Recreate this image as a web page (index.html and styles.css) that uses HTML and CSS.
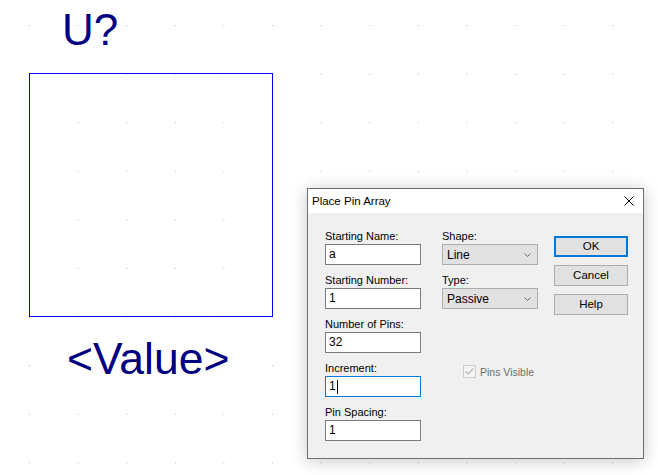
FILE: index.html
```html
<!DOCTYPE html>
<html lang="en">
<head>
    <meta charset="UTF-8">
    <meta name="viewport" content="width=device-width, initial-scale=1.0">
    <title>Place Pin Array</title>
    <link rel="stylesheet" href="styles.css">
</head>
<body>
    <div class="sheet">
        <!-- grid dots of the schematic sheet -->
        <svg class="grid" width="658" height="475">
            <defs>
                <pattern id="dots" x="29" y="25" width="48.6" height="48.6" patternUnits="userSpaceOnUse">
                    <rect x="0" y="0" width="1" height="1" fill="#b9b9b9" shape-rendering="crispEdges"/>
                </pattern>
            </defs>
            <rect width="658" height="475" fill="url(#dots)"/>
        </svg>

        <div class="part-ref">U?</div>
        <div class="part-body"></div>
        <div class="part-value">&lt;Value&gt;</div>

        <div class="dialog">
            <div class="titlebar">
                <span class="title">Place Pin Array</span>
                <span class="close">
                    <svg width="10" height="10" viewBox="0 0 10 10">
                        <path d="M0.5 0.5 L9.5 9.5 M9.5 0.5 L0.5 9.5" stroke="#000" stroke-width="1"/>
                    </svg>
                </span>
            </div>
            <div class="dialog-body">
                <div class="col-fields">
                    <div class="field">
                        <label>Starting Name:</label>
                        <div class="textbox">a</div>
                    </div>
                    <div class="field">
                        <label>Starting Number:</label>
                        <div class="textbox">1</div>
                    </div>
                    <div class="field">
                        <label>Number of Pins:</label>
                        <div class="textbox">32</div>
                    </div>
                    <div class="field">
                        <label>Increment:</label>
                        <div class="textbox focused">1<span class="caret"></span></div>
                    </div>
                    <div class="field">
                        <label>Pin Spacing:</label>
                        <div class="textbox">1</div>
                    </div>
                </div>

                <div class="col-mid">
                    <div class="field">
                        <label>Shape:</label>
                        <div class="combo">
                            <span>Line</span>
                            <svg width="7" height="4" viewBox="0 0 7 4"><polyline points="0.5,0.5 3.5,3.5 6.5,0.5" fill="none" stroke="#6d6d6d" stroke-width="1"/></svg>
                        </div>
                    </div>
                    <div class="field">
                        <label>Type:</label>
                        <div class="combo">
                            <span>Passive</span>
                            <svg width="7" height="4" viewBox="0 0 7 4"><polyline points="0.5,0.5 3.5,3.5 6.5,0.5" fill="none" stroke="#6d6d6d" stroke-width="1"/></svg>
                        </div>
                    </div>
                    <div class="check-row">
                        <span class="checkbox">
                            <svg width="11" height="11" viewBox="0 0 11 11"><polyline points="1.5,5.5 4,8 9.5,2.5" fill="none" stroke="#b4b4b4" stroke-width="1.2"/></svg>
                        </span>
                        <span class="check-label">Pins Visible</span>
                    </div>
                </div>

                <div class="col-buttons">
                    <div class="btn default">OK</div>
                    <div class="btn">Cancel</div>
                    <div class="btn">Help</div>
                </div>
            </div>
        </div>
    </div>
</body>
</html>
```

FILE: styles.css
```css
body {
    margin: 0;
    padding: 0;
    background-color: #ffffff;
}
.sheet {
    position: relative;
    width: 658px;
    height: 475px;
    overflow: hidden;
    background-color: #ffffff;
    font-family: "Liberation Sans", Arial, sans-serif;
}
.grid {
    position: absolute;
    left: 0;
    top: 0;
}

/* schematic symbol, placed on the free canvas */
.part-ref {
    position: absolute;
    left: 62px;
    top: 8px;
    font-size: 44px;
    line-height: 44px;
    color: #000080;
}
.part-body {
    position: absolute;
    left: 29px;
    top: 73px;
    width: 242px;
    height: 242px;
    border: 1px solid #0000ff;
}
.part-value {
    position: absolute;
    left: 67px;
    top: 337px;
    font-size: 44.5px;
    line-height: 44.5px;
    color: #000080;
}

/* dialog window over the sheet */
.dialog {
    position: absolute;
    left: 307px;
    top: 188px;
    width: 335px;
    height: 269px;
    border: 1px solid #6e6e6e;
    background-color: #f0f0f0;
    box-shadow: 0 2px 16px rgba(0, 0, 0, 0.22);
    font-size: 11px;
    color: #000000;
}
.titlebar {
    height: 24px;
    background-color: #ffffff;
    display: flex;
    align-items: center;
    justify-content: space-between;
}
.title {
    padding-left: 4px;
    font-size: 11.5px;
}
.close {
    width: 28px;
    height: 24px;
    display: flex;
    align-items: center;
    justify-content: center;
}
.close svg {
    display: block;
}

.dialog-body {
    display: flex;
    align-items: flex-start;
    padding: 17px 0 0 17px;
}
.col-fields {
    width: 96px;
}
.col-mid {
    width: 96px;
    margin-left: 21px;
}
.col-buttons {
    width: 74px;
    margin-left: 16px;
    margin-top: 6px;
    display: flex;
    flex-direction: column;
    gap: 8px;
}

.field {
    margin-bottom: 9px;
}
.field label {
    display: block;
    height: 13px;
    line-height: 13px;
    margin-bottom: 1px;
    white-space: nowrap;
}
.textbox {
    height: 21px;
    box-sizing: border-box;
    border: 1px solid #7a7a7a;
    background-color: #ffffff;
    padding-left: 3px;
    font-size: 12px;
    line-height: 19px;
    display: flex;
    align-items: center;
}
.textbox.focused {
    border-color: #0078d7;
}
.caret {
    display: inline-block;
    width: 1px;
    height: 14px;
    margin-left: 1px;
    background-color: #000000;
}

.combo {
    height: 21px;
    box-sizing: border-box;
    border: 1px solid #adadad;
    background-color: #e1e1e1;
    padding: 0 6px 0 4px;
    font-size: 12px;
    display: flex;
    align-items: center;
    justify-content: space-between;
}
.combo svg {
    display: block;
}

.check-row {
    margin-top: 56px;
    padding-left: 21px;
    display: flex;
    align-items: center;
    white-space: nowrap;
}
.checkbox {
    flex: none;
    width: 13px;
    height: 13px;
    box-sizing: border-box;
    border: 1px solid #cccccc;
    background-color: #f4f4f4;
    display: flex;
    align-items: center;
    justify-content: center;
}
.checkbox svg {
    display: block;
}
.check-label {
    margin-left: 4px;
    color: #6d6d6d;
    font-size: 10.5px;
}

.btn {
    height: 21px;
    box-sizing: border-box;
    border: 1px solid #adadad;
    background-color: #e1e1e1;
    text-align: center;
    line-height: 19px;
    font-size: 11.5px;
}
.btn.default {
    border: 2px solid #0078d7;
    line-height: 17px;
}
```
